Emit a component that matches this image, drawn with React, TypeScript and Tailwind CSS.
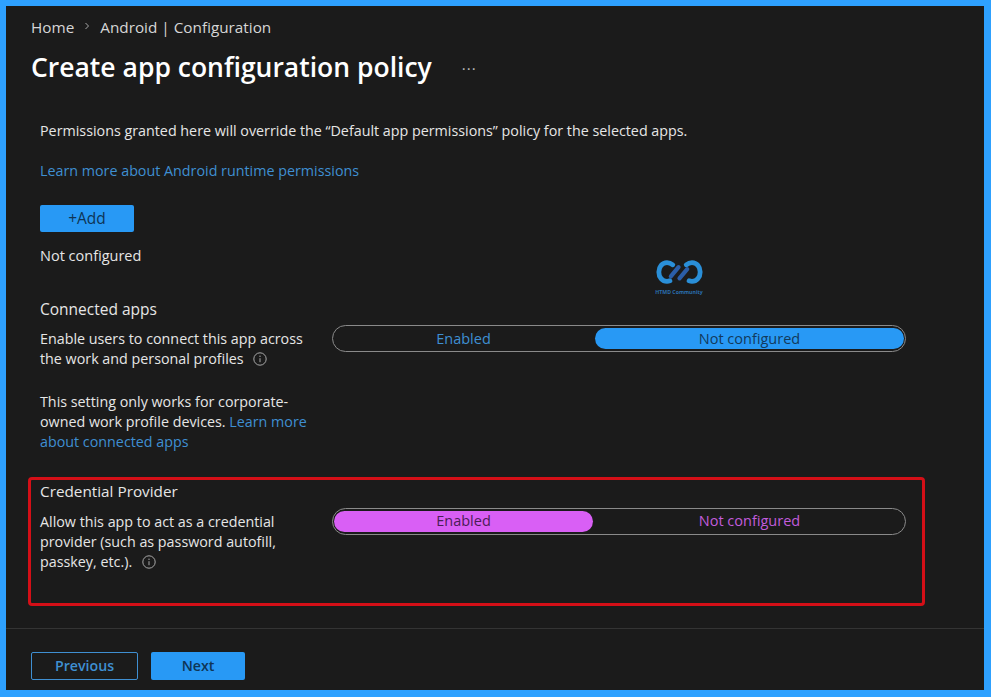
import React from "react";

function Info({ className = "" }: { className?: string }) {
  return (
    <svg viewBox="0 0 14 14" className={`inline-block w-[14px] h-[14px] ${className}`} fill="none">
      <circle cx="7" cy="7" r="6.2" stroke="#a8a8a8" strokeWidth="1" />
      <path d="M7 6.2V10.2" stroke="#a8a8a8" strokeWidth="1" />
      <circle cx="7" cy="4.2" r="0.7" fill="#a8a8a8" />
    </svg>
  );
}

function Toggle({ left, right, on, color }: { left: string; right: string; on: "left" | "right"; color: "blue" | "pink" }) {
  const pill = color === "blue" ? "bg-[#2899f5] text-[#123a5c] pt-[1px]" : "bg-[#d95ff5] text-[#4a1d56]";
  const off = color === "blue" ? "text-[#3f8fd2] pt-[1px]" : "text-[#c25cdc]";
  return (
    <div className="w-[574px] h-[27px] rounded-full border border-[#8a8a8a] flex items-center p-[1px] text-[14.5px] leading-none">
      <div className={`w-[259px] h-[21px] rounded-full flex items-center justify-center ${on === "left" ? pill : off}`}>{left}</div>
      <div className={`ml-[2px] w-[309px] h-[21px] rounded-full flex items-center justify-center ${on === "right" ? pill : off}`}>{right}</div>
    </div>
  );
}

export default function App() {
  return (
    <div
      className="relative w-[991px] h-[697px] overflow-hidden bg-[#1b1b1b] border-t-[6px] border-l-[6px] border-r-[7px] border-b-[7px] border-[#2ea1ff] text-[#e6e6e6] flex flex-col"
      style={{ fontFamily: '"Open Sans", "Noto Sans", sans-serif' }}
    >
      <div className="flex-1 pl-[25px]">
        <div className="flex items-center h-[20px] mt-[12px] text-[15.3px] text-[#d6d6d6] leading-none">
          <span>Home</span>
          <svg viewBox="0 0 8 8" className="w-[8px] h-[8px] ml-[9px] mr-[9px] -mt-[5px]" fill="none">
            <path d="M2.5 1L5.5 4L2.5 7" stroke="#b5b5b5" strokeWidth="0.9" />
          </svg>
          <span>Android | Configuration</span>
        </div>
        <div className="flex items-center h-[40px] mt-[9px]">
          <h1 className="text-[26.5px] font-semibold text-white leading-none">Create app configuration policy</h1>
          <span className="ml-[30px] mt-[2px] text-[15px] text-[#bdbdbd] leading-none tracking-[1px]">···</span>
        </div>

        <div className="pl-[9px] text-[14.3px] leading-[20px]">
          <p className="mt-[34px]">Permissions granted here will override the “Default app permissions” policy for the selected apps.</p>
          <a className="block mt-[20px] text-[#3f8fd2]">Learn more about Android runtime permissions</a>
          <button className="block mt-[24px] w-[94px] h-[27px] rounded-[2px] bg-[#2899f5] text-[#0f3556] text-[15.5px] leading-none">+Add</button>
          <p className="mt-[14px] text-[14.5px]">Not configured</p>

          <h2 className="mt-[33px] text-[15.5px] leading-[20px]">Connected apps</h2>
          <div className="flex mt-[10px]">
            <div className="w-[292px]">
              <p>
                Enable users to connect this app across
                <br />
                the work and personal profiles <Info className="ml-[6px] align-[-2px]" />
              </p>
              <p className="mt-[23px]">
                This setting only works for corporate-
                <br />
                owned work profile devices. <span className="text-[#3f8fd2]">Learn more</span>
                <br />
                <span className="text-[#3f8fd2]">about connected apps</span>
              </p>
            </div>
            <div className="-mt-[4px]">
              <Toggle left="Enabled" right="Not configured" on="right" color="blue" />
            </div>
          </div>
        </div>

        <section className="mt-[25px] w-[897px] h-[129px] -translate-x-[3px] border-[3px] border-[#d40f17] rounded-[4px] pl-[9px] pt-[1px] text-[14.3px] leading-[20px]">
          <h2 className="text-[15.3px] leading-[20px]">Credential Provider</h2>
          <div className="flex mt-[11px]">
            <p className="w-[292px]">
              Allow this app to act as a credential
              <br />
              provider (such as password autofill,
              <br />
              passkey, etc.). <Info className="ml-[6px] align-[-2px]" />
            </p>
            <div className="-mt-[4px]">
              <Toggle left="Enabled" right="Not configured" on="left" color="pink" />
            </div>
          </div>
        </section>
      </div>

      <div className="h-[62px] border-t border-[#343434] flex items-start pl-[25px] pt-[23px] gap-[13px] text-[14.2px] shrink-0">
        <button className="w-[107px] h-[28px] rounded-[2px] border border-[#3f8fd2] text-[#3f8fd2] font-semibold leading-none">Previous</button>
        <button className="w-[94px] h-[28px] rounded-[2px] bg-[#2899f5] text-[#0f3556] font-semibold leading-none">Next</button>
      </div>

      <div className="absolute left-[644px] top-[254px] w-[58px] flex flex-col items-center">
        <svg viewBox="0 0 48 26" className="w-[47px] h-[25px]" fill="none">
          <path d="M17 5C15 3.4 13 2.8 11 2.8C6 2.8 2.5 7 2.5 12.5C2.5 18 6 22.2 11 22.2C12 22.2 13 22 14 21.6" stroke="#2a8fd8" strokeWidth="5" strokeLinecap="round" />
          <path d="M31 5C33 3.4 35 2.8 37 2.8C42 2.8 45.5 7 45.5 12.5C45.5 18 42 22.2 37 22.2C36 22.2 35 22 34 21.6" stroke="#2a8fd8" strokeWidth="5" strokeLinecap="round" />
          <path d="M15 17L23 7.5" stroke="#2b5ea8" strokeWidth="4.4" strokeLinecap="round" />
          <path d="M24 19L32 9.5" stroke="#2b5ea8" strokeWidth="4.4" strokeLinecap="round" />
        </svg>
        <span className="text-[5.2px] font-bold text-[#2a6fb0] leading-none mt-[5px] whitespace-nowrap">HTMD Community</span>
      </div>
    </div>
  );
}
